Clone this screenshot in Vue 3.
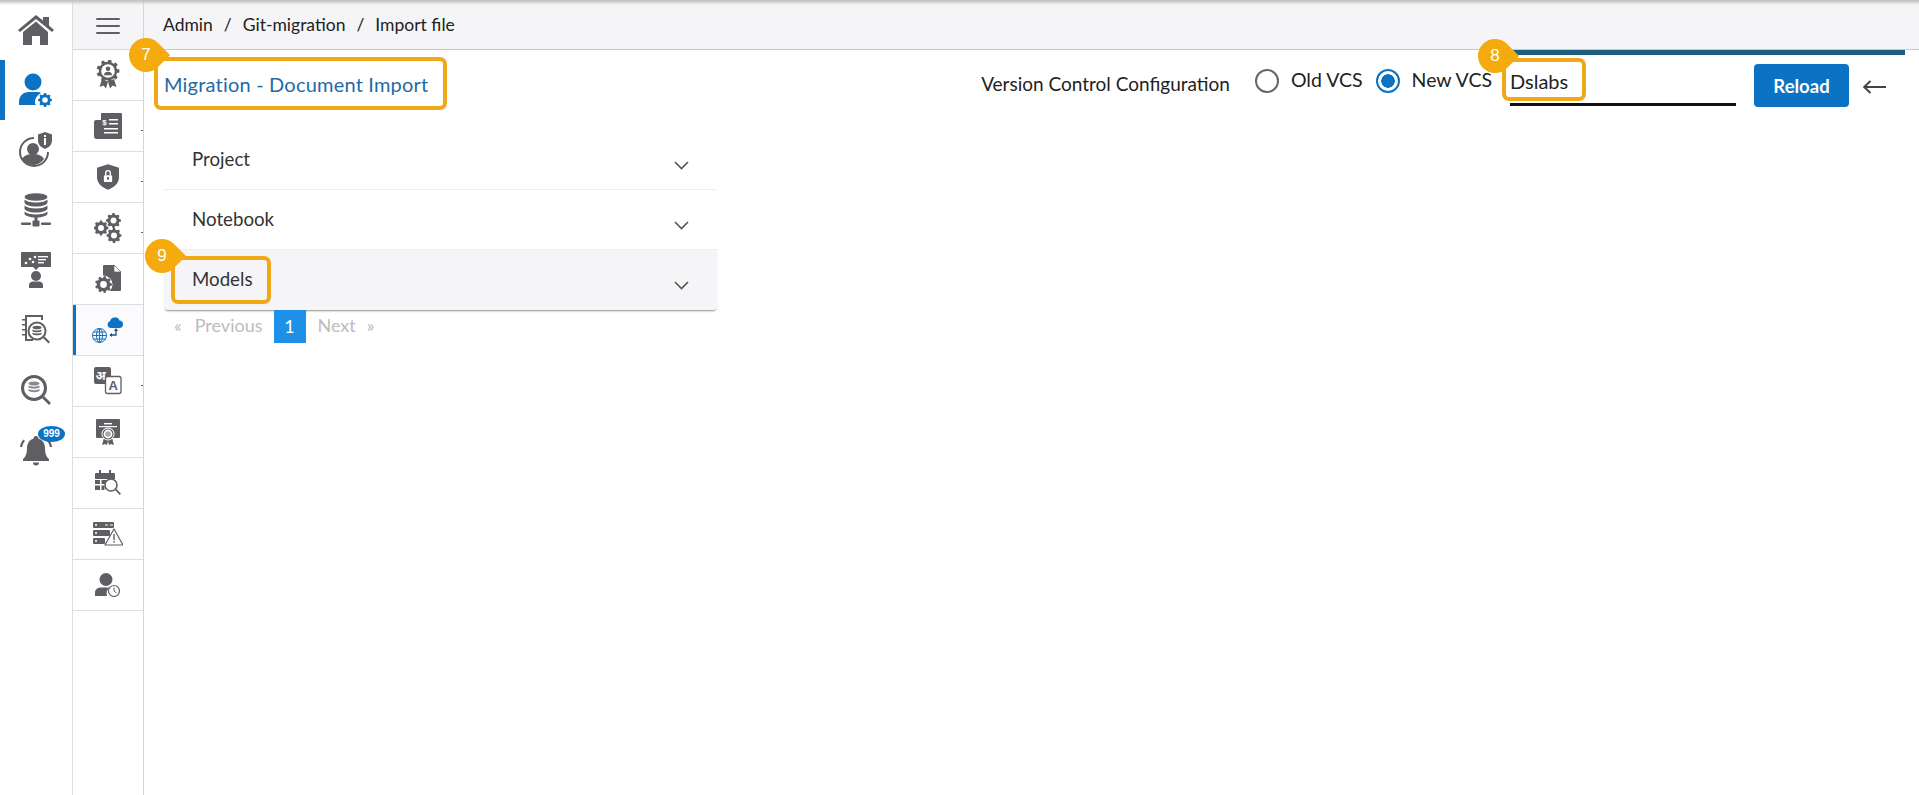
<script setup>
function gear(cx, cy, r, teeth = 8) {
  const pts = []
  const hole = r * 0.4
  const inner = r * 0.8
  for (let i = 0; i < teeth; i++) {
    const a = (i / teeth) * Math.PI * 2
    const w = Math.PI / teeth
    const p = [
      [inner, a - w * 0.62],
      [r, a - w * 0.36],
      [r, a + w * 0.36],
      [inner, a + w * 0.62]
    ]
    p.forEach(([d, t]) => pts.push(`${(cx + d * Math.cos(t)).toFixed(2)} ${(cy + d * Math.sin(t)).toFixed(2)}`))
  }
  return `M${pts.join('L')}ZM${cx + hole} ${cy}a${hole} ${hole} 0 1 0 ${-2 * hole} 0a${hole} ${hole} 0 1 0 ${2 * hole} 0Z`
}
const accordion = [
  { name: 'Project' },
  { name: 'Notebook' },
  { name: 'Models', active: true }
]
</script>

<template>
  <div class="page">
    <aside class="rail">
      <div class="rail-item">
        <svg width="36" height="30" viewBox="0 0 36 30" class="ic"><path d="M0 15 18 0l7 5.6V2h6v8.6L36 15l-2 2L18 4 2 17Z"/><path d="M5 17 18 6.500 30 17v13h-8v-9h-8v9H5Z"/></svg>
      </div>
      <div class="rail-item active">
        <svg width="34" height="34" viewBox="0 0 34 34" class="ic-blue"><circle cx="14" cy="9" r="8.500"/><path d="M0 32v-3c0-7 5-10 10-10h8c2 0 3 .4 4 1-3 1.500-6 5-6 9 0 1.500.4 2.500 1 3Z"/><path :d="gear(26, 27, 7)" fill-rule="evenodd"/></svg>
      </div>
      <div class="rail-item">
        <svg width="34" height="36" viewBox="0 0 34 36" class="ic"><path d="M15 5a15 15 0 1 0 15 15h-2a13 13 0 1 1-13-13Z"/><circle cx="14" cy="17" r="6"/><path d="M3 27c2-4 7-5 11-5s9 1 11 5c-3 4-7 6-11 6s-8-2-11-6Z"/><path d="M26 0l7 2.500v6c0 4-3 7-7 8.500-4-1.500-7-4.500-7-8.500v-6Z"/><rect x="25" y="6" width="2" height="7" fill="#fff"/><rect x="25" y="3" width="2" height="2" fill="#fff"/></svg>
      </div>
      <div class="rail-item">
        <svg width="30" height="34" viewBox="0 0 30 34" class="ic"><ellipse cx="15" cy="4" rx="11.500" ry="3.800"/><path d="M3.500 6.500c2 2 6 3 11.500 3s9.500-1 11.500-3v3c0 2-5 4-11.500 4s-11.500-2-11.500-4Z"/><path d="M3.500 12.500c2 2 6 3 11.500 3s9.500-1 11.500-3v3c0 2-5 4-11.500 4s-11.500-2-11.500-4Z"/><path d="M3.500 18.500c2 2 6 3 11.500 3s9.500-1 11.500-3v2c0 2-5 4-11.500 4s-11.500-2-11.500-4Z"/><rect x="13.500" y="24" width="3" height="4"/><rect x="11.500" y="27.500" width="7" height="6" rx="1"/><rect x="0" y="29.500" width="10" height="2.400" rx="1"/><rect x="20" y="29.500" width="10" height="2.400" rx="1"/></svg>
      </div>
      <div class="rail-item">
        <svg width="30" height="36" viewBox="0 0 30 36" class="ic"><path d="M1 0h28a1 1 0 0 1 1 1v13a1 1 0 0 1-1 1H18l-3 3-3-3H1a1 1 0 0 1-1-1V1a1 1 0 0 1 1-1Z"/><g fill="#fff"><circle cx="5" cy="11" r="1.300"/><circle cx="9" cy="7" r="1.300"/><circle cx="12" cy="10" r="1.300"/><circle cx="14" cy="5" r="1.300"/><rect x="17" y="4" width="10" height="1.400"/><rect x="17" y="7" width="8" height="1.400"/><rect x="17" y="10" width="6" height="1.400"/></g><circle cx="15" cy="24" r="5"/><path d="M8 36v-3c0-2 2-3.500 4-3.500h6c2 0 4 1.500 4 3.500v3Z"/></svg>
      </div>
      <div class="rail-item">
        <svg width="30" height="32" viewBox="0 0 30 32" class="ic"><path d="M4 1h18v5h-2V3H6v22h6v2H4Z"/><path d="M1 5h5v1.500H1zM1 10h5v1.500H1zM1 15h5v1.500H1zM1 20h5v1.500H1z"/><circle cx="16" cy="17" r="8.500" fill="#fff" stroke="#5f5f63" stroke-width="2"/><ellipse cx="16" cy="13.500" rx="4.500" ry="1.800"/><path d="M11.500 15.500c2 1.400 7 1.400 9 0v1.800c-2 1.400-7 1.400-9 0ZM11.500 18.500c2 1.400 7 1.400 9 0v1.800c-2 1.400-7 1.400-9 0Z"/><path d="m22 24 1.500-1.500L29 28l-1.500 1.500Z"/></svg>
      </div>
      <div class="rail-item">
        <svg width="32" height="32" viewBox="0 0 32 32" class="ic"><circle cx="14" cy="14" r="11.500" fill="none" stroke="#5f5f63" stroke-width="3"/><ellipse cx="14" cy="9.500" rx="5.500" ry="2" fill="#8a8a8e"/><path d="M8.500 11.500c2 1.500 9 1.500 11 0v2c-2 1.500-9 1.500-11 0ZM8.500 15c2 1.500 9 1.500 11 0v2c-2 1.500-9 1.500-11 0Z" fill="#8a8a8e"/><path d="m22 24 2-2 7 7-2 2Z"/></svg>
      </div>
      <div class="rail-item bell">
        <svg width="32" height="32" viewBox="0 0 32 32" class="ic"><path d="M16 1c1.500 0 2.500 1 2.500 2.500C23 5 25 9 25 13c0 6 1.500 9 4 11v2H3v-2c2.500-2 4-5 4-11 0-4 2-8 6.500-9.500C13.500 2 14.500 1 16 1Z"/><path d="M13 27.500h6a3 3 0 0 1-6 0Z"/><path d="M0 12c.3-3 1.500-5.500 3.500-7.500L5 6C3.500 7.500 2.500 9.500 2.200 12ZM32 12c-.3-3-1.500-5.500-3.500-7.500L27 6c1.500 1.500 2.500 3.500 2.800 6Z"/></svg>
        <span class="count">999</span>
      </div>
    </aside>

    <nav class="sub">
      <div class="sub-head">
        <svg width="24" height="16" viewBox="0 0 24 16"><rect y="0" width="24" height="2" rx="1"/><rect y="7" width="24" height="2" rx="1"/><rect y="14" width="24" height="2" rx="1"/></svg>
      </div>
      <div class="sub-item">
        <svg width="30" height="30" viewBox="0 0 30 30" class="ic"><path :d="gear(15, 11, 11.500, 9)" fill-rule="evenodd"/><circle cx="15" cy="11" r="6.800" fill="#fff"/><circle cx="15" cy="8.800" r="2.300"/><path d="M11 15.200c0-2.400 1.800-3.400 4-3.400s4 1 4 3.400Z"/><path d="m9 19-2.500 8 4-1.500 2.500 3 2-7ZM21 19l2.500 8-4-1.500-2.500 3-2-7Z"/></svg>
      </div>
      <div class="sub-item tick">
        <svg width="28" height="26" viewBox="0 0 28 26" class="ic"><path d="M7 1a1 1 0 0 1 1-1h19a1 1 0 0 1 1 1v24a1 1 0 0 1-1 1H3a3 3 0 0 1-3-3V9a2 2 0 0 1 2-2h5Z"/><g fill="#fff"><rect x="15" y="6" width="9" height="1.500"/><rect x="15" y="10" width="9" height="1.500"/><rect x="10" y="15" width="14" height="1.500"/><rect x="10" y="19" width="14" height="1.500"/></g><text x="10.500" y="11.500" class="dollar">$</text></svg>
      </div>
      <div class="sub-item tick">
        <svg width="22" height="28" viewBox="0 0 24 28" class="ic"><path d="M12 0 24 4v10c0 7-5 11-12 14C5 25 0 21 0 14V4Z"/><rect x="7.500" y="12" width="9" height="7.500" rx="1" fill="#fff"/><path d="M9.500 12V9.500a2.500 2.500 0 0 1 5 0V12" fill="none" stroke="#fff" stroke-width="1.500"/><rect x="11" y="14" width="2" height="3"/></svg>
      </div>
      <div class="sub-item tick">
        <svg width="28" height="30" viewBox="0 0 28 30" class="ic"><path :d="gear(7, 15, 7.500)" fill-rule="evenodd"/><path :d="gear(19.500, 7.500, 7.500)" fill-rule="evenodd"/><path :d="gear(20, 22.500, 7.500)" fill-rule="evenodd"/></svg>
      </div>
      <div class="sub-item">
        <svg width="26" height="28" viewBox="0 0 26 28" class="ic"><path d="M8 1a1 1 0 0 1 1-1h10l7 7v18a1 1 0 0 1-1 1H14c2-5 0-12-6-13Z"/><path d="M19 0v7h7Z" fill="#fff" stroke="#5f5f63" stroke-width=".7"/><circle cx="8.500" cy="19.500" r="9" fill="#fff"/><path :d="gear(8.500, 19.500, 8.500, 9)" fill-rule="evenodd"/></svg>
      </div>
      <div class="sub-item active">
        <svg width="32" height="27" viewBox="0 0 32 27" class="ic-blue"><path d="M19 11a3.500 3.500 0 0 1-1-6.800A5 5 0 0 1 27.500 3.500 3.800 3.800 0 0 1 28 11Z"/><g fill="none" stroke="currentColor" stroke-width="1"><circle cx="7.500" cy="18.500" r="7"/><ellipse cx="7.500" cy="18.500" rx="3" ry="7"/><path d="M.5 18.500h14M1.500 15h12M1.500 22h12M7.500 11.500v14"/></g><path d="M24 13v5h-6" fill="none" stroke="#1d4f7a" stroke-width="1.300"/><path d="m20 16-2.500 2 2.500 2ZM22 14l2-3 2 3Z" fill="#1d4f7a"/></svg>
      </div>
      <div class="sub-item tick">
        <svg width="28" height="28" viewBox="0 0 28 28"><rect width="17" height="17" rx="2" fill="#5f5f63"/><text x="6.500" y="12.500" class="hindi">अ</text><rect x="11.500" y="9.500" width="15.500" height="17" rx="2" fill="#fff" stroke="#5f5f63" stroke-width="1.300"/><text x="19.200" y="23" class="latin">A</text></svg>
      </div>
      <div class="sub-item">
        <svg width="24" height="26" viewBox="0 0 24 26" class="ic"><path d="M1 0h22a1 1 0 0 1 1 1v17a1 1 0 0 1-1 1H1a1 1 0 0 1-1-1V1a1 1 0 0 1 1-1Z"/><rect x="8" y="4" width="8" height="1.400" fill="#fff"/><rect x="3" y="7" width="18" height="1.200" fill="#fff"/><path d="m8 19-2 7 3-1 2 1 1-4 1 4 2-1 3 1-2-7Z"/><circle cx="12" cy="15" r="6.500" fill="#fff"/><circle cx="12" cy="15" r="5" fill="#fff" stroke="#5f5f63" stroke-width="1.200"/><circle cx="12" cy="15" r="2.800" fill="#a8a8ac"/></svg>
      </div>
      <div class="sub-item">
        <svg width="26" height="27" viewBox="0 0 26 27" class="ic"><path d="M0 4a1 1 0 0 1 1-1h3V0h2v3h8V0h2v3h3a1 1 0 0 1 1 1v5H0Z"/><path d="M0 10h5v4H0zM6.500 10h5v4h-5zM0 15.500h5V20H0zM6.500 15.500h3V20h-3z"/><circle cx="16" cy="15" r="6" fill="#fff" stroke="#5f5f63" stroke-width="1.600"/><path d="m20 20 1.200-1.200 4.800 5-1.200 1.200Z"/></svg>
      </div>
      <div class="sub-item">
        <svg width="30" height="24" viewBox="0 0 30 24" class="ic"><rect width="21" height="6" rx="1"/><rect y="8" width="17" height="6" rx="1"/><rect y="16" width="12" height="6" rx="1"/><g fill="#fff"><circle cx="3" cy="3" r="1"/><rect x="12" y="2.500" width="3" height="1"/><rect x="17" y="2.500" width="3" height="1"/><circle cx="3" cy="11" r="1"/><circle cx="3" cy="19" r="1"/></g><path d="M21 7 30 23H12Z" fill="#fff" stroke="#5f5f63" stroke-width="1.200" stroke-linejoin="round"/><rect x="20.300" y="12" width="1.400" height="6"/><rect x="20.300" y="19" width="1.400" height="1.600"/></svg>
      </div>
      <div class="sub-item">
        <svg width="26" height="24" viewBox="0 0 26 24" class="ic"><circle cx="11" cy="6.500" r="6.500"/><path d="M0 23v-3c0-4 3-5.500 6-5.500h9c-3 1.500-4 5-3 8.500Z"/><circle cx="19" cy="18" r="5.500" fill="#fff" stroke="#5f5f63" stroke-width="1.200"/><path d="M19 14.500V18l2.500 2" fill="none" stroke="#5f5f63" stroke-width="1"/></svg>
      </div>
    </nav>

    <main class="main">
      <header class="crumbs">
        <span>Admin</span><i>/</i><span>Git-migration</span><i>/</i><span>Import file</span>
      </header>
      <div class="stripe"></div>

      <section class="toolbar">
        <h1 class="title">Migration - Document Import</h1>
        <div class="controls">
          <span class="vcs-label">Version Control Configuration</span>
          <span class="radio"></span>
          <span class="radio-text old">Old VCS</span>
          <span class="radio on"></span>
          <span class="radio-text">New VCS</span>
          <span class="input">Dslabs</span>
          <button class="reload">Reload</button>
          <svg class="back" width="23" height="14" viewBox="0 0 23 14"><path d="M1 7h22M7.500 1 1.200 7l6.300 6" fill="none" stroke="#444" stroke-width="2"/></svg>
        </div>
      </section>

      <section class="accordion">
        <div v-for="row in accordion" :key="row.name" class="acc-row" :class="{ active: row.active }">
          <span>{{ row.name }}</span>
          <svg width="15" height="9" viewBox="0 0 15 9"><path d="m1 1 6.500 6.500L14 1" fill="none" stroke="#555" stroke-width="1.600"/></svg>
        </div>
      </section>

      <div class="pager">
        <span class="dbl">«</span>
        <span class="prev">Previous</span>
        <span class="page-no">1</span>
        <span class="next">Next</span>
        <span class="dbl">»</span>
      </div>
    </main>

    <div class="mark m7"></div>
    <div class="mark m8"></div>
    <div class="mark m9"></div>
    <div class="tag t7"><span>7</span></div>
    <div class="tag t8"><span>8</span></div>
    <div class="tag t9"><span>9</span></div>
  </div>
</template>

<style>
html, body { margin: 0; background: #fff; }
</style>

<style scoped>
.page {
  position: relative;
  display: flex;
  height: 795px;
  overflow: hidden;
  background: #fff;
  font-family: Lato, "Noto Sans", sans-serif;
  color: #222;
}
.page::before {
  content: "";
  position: absolute;
  inset: 0 0 auto 0;
  height: 5px;
  background: linear-gradient(#bdbdbd, rgba(200, 200, 200, 0));
  z-index: 3;
}
.ic { fill: #5f5f63; }
.ic-blue { fill: #0b72c4; color: #0b72c4; }

.rail {
  width: 72px;
  flex: none;
  border-right: 1px solid #dedede;
}
.rail-item {
  position: relative;
  height: 60px;
  display: flex;
  align-items: center;
  justify-content: center;
}
.rail-item.active { box-shadow: inset 5px 0 0 #0b72c4; }
.rail-item.bell svg { margin-top: 2px; margin-left: -1px; }
.count {
  position: absolute;
  left: 38px;
  top: 6px;
  width: 27px;
  height: 16px;
  border-radius: 50%;
  background: #0b72c4;
  color: #fff;
  font: 700 10px/16px "Liberation Sans", sans-serif;
  text-align: center;
}

.sub {
  width: 70px;
  flex: none;
  border-right: 1px solid #d5d5d5;
}
.sub-head {
  height: 47px;
  display: flex;
  align-items: center;
  justify-content: center;
  background: #f5f5f7;
  border-bottom: 1px solid #d8d8d8;
  padding-top: 2px;
}
.sub-head svg { fill: #5f5f63; }
.sub-item {
  position: relative;
  height: 50px;
  display: flex;
  align-items: center;
  justify-content: center;
  border-bottom: 1px solid #dedede;
}
.sub-item.active { box-shadow: inset 3px 0 0 #0b72c4; background: #fbfbfd; }
.sub-item.tick::after {
  content: "";
  position: absolute;
  right: 0;
  top: 29px;
  width: 2px;
  height: 1px;
  background: #666;
}
.dollar { font: 700 8px "Liberation Sans", sans-serif; fill: #fff; text-anchor: middle; }
.hindi { font: 700 12px "Noto Sans", "DejaVu Sans", sans-serif; fill: #fff; text-anchor: middle; }
.latin { font: 700 13px "Liberation Sans", sans-serif; fill: #5f5f63; text-anchor: middle; }

.main {
  position: relative;
  flex: 1;
  min-width: 0;
}
.crumbs {
  height: 34px;
  padding: 15px 0 0 19px;
  background: #f5f5f7;
  border-bottom: 1px solid #c9c9c9;
  font-size: 17.5px;
  line-height: 20px;
  color: #222;
}
.crumbs i { font-style: normal; margin: 0 11px; }
.stripe {
  position: absolute;
  left: 1360px;
  right: 14px;
  top: 50px;
  height: 5px;
  background: #1b5e80;
}
.toolbar {
  position: relative;
  height: 80px;
  display: flex;
  justify-content: space-between;
}
.title {
  margin: 23px 0 0 20px;
  font-size: 20px;
  line-height: 22px;
  font-weight: 400;
  color: #1f6aa5;
  letter-spacing: .2px;
}
.controls {
  display: flex;
  align-items: flex-start;
  height: 50px;
  padding-top: 14px;
}
.vcs-label {
  margin-top: 9px;
  font-size: 19px;
  line-height: 22px;
  margin-right: 25px;
}
.radio {
  width: 24px;
  height: 24px;
  box-sizing: border-box;
  border: 2px solid #666;
  border-radius: 50%;
  margin-top: 5px;
  flex: none;
}
.radio.on {
  border-color: #0b72c4;
  background: radial-gradient(circle, #0b72c4 0 6.500px, #fff 7px);
  margin-left: 13px;
}
.radio-text {
  margin: 5px 0 0 12px;
  font-size: 19.500px;
  line-height: 22px;
}
.input {
  width: 226px;
  box-sizing: border-box;
  height: 42px;
  margin-left: 18px;
  border-bottom: 3px solid #111;
  font-size: 20px;
  line-height: 22px;
  padding-top: 6px;
}
.reload {
  width: 95px;
  height: 43px;
  margin-left: 18px;
  border: 0;
  border-radius: 4px;
  background: #0b72c4;
  color: #fff;
  font: 700 18.500px Lato, sans-serif;
}
.back { margin: 16px 33px 0 14px; flex: none; }

.accordion {
  width: 553px;
  margin-left: 20px;
}
.acc-row {
  height: 60px;
  box-sizing: border-box;
  padding: 18px 28px 0 28px;
  display: flex;
  justify-content: space-between;
  align-items: flex-start;
  font-size: 18.700px;
  line-height: 22px;
  color: #333;
  border-bottom: 1px solid #eee;
}
.acc-row svg { margin-top: 13px; }
.acc-row.active {
  background: #f5f5f7;
  border-bottom: 0;
  border-radius: 0 0 4px 4px;
  box-shadow: 0 2px 2px -1px rgba(0, 0, 0, .45);
}
.pager {
  height: 33px;
  display: flex;
  align-items: center;
  color: #bcbcbc;
  font-size: 18px;
  margin: 0 0 0 30px;
}
.pager .dbl, .prev, .next { margin-bottom: 3px; }
.prev { margin-left: 13px; }
.page-no {
  width: 32px;
  height: 33px;
  margin: 0 12px 0 11px;
  background: #1e90e8;
  color: #fff;
  text-align: center;
  line-height: 33px;
}
.next + .dbl { margin-left: 11px; }

.mark {
  position: absolute;
  box-sizing: border-box;
  border: 4px solid #f0a818;
  border-radius: 7px;
  z-index: 4;
}
.m7 { left: 154px; top: 57px; width: 293px; height: 53px; }
.m8 { left: 1502px; top: 58px; width: 84px; height: 43px; }
.m9 { left: 171px; top: 256px; width: 100px; height: 48px; }
.tag {
  position: absolute;
  width: 34px;
  height: 34px;
  z-index: 5;
  color: #fff;
  font: 400 17px/34px "Liberation Sans", sans-serif;
  text-align: center;
}
.tag::before {
  content: "";
  position: absolute;
  inset: 0;
  background: #f5ab0d;
  border-radius: 50% 0 50% 50%;
  transform: rotate(45deg);
}
.tag span { position: relative; }
.t7 { left: 129px; top: 38px; }
.t8 { left: 1478px; top: 39px; }
.t9 { left: 145px; top: 239px; }
</style>
